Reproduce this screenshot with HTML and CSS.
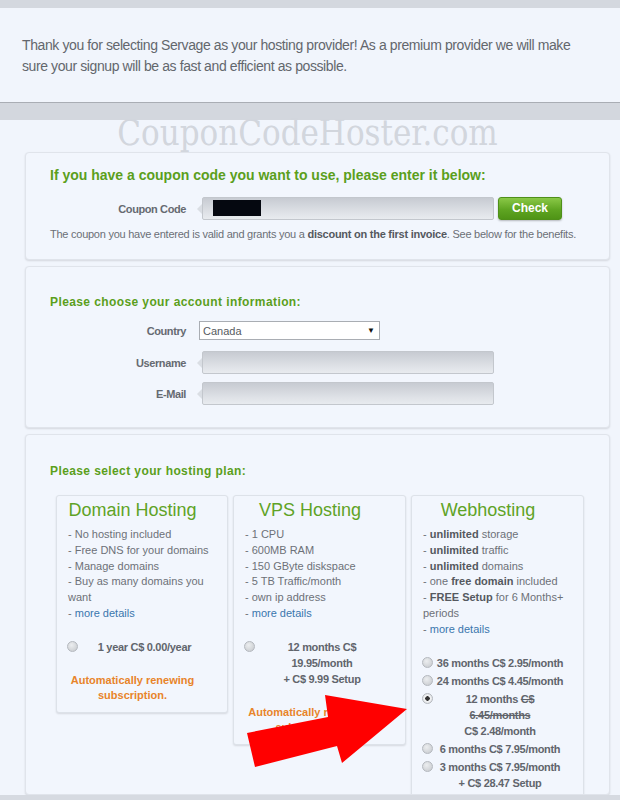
FILE: index.html
```html
<!DOCTYPE html>
<html lang="en">
<head>
    <meta charset="UTF-8">
    <title>Servage Signup</title>
    <link rel="stylesheet" href="styles.css">
</head>
<body>
<div class="page">
    <div class="topbar"></div>
    <div class="intro">
        <p>Thank you for selecting Servage as your hosting provider! As a premium provider we will make sure your signup will be as fast and efficient as possible.</p>
    </div>
    <div class="band"></div>

    <div class="signup">
        <div class="watermark">CouponCodeHoster.com</div>

        <!-- coupon -->
        <div class="card coupon-card">
            <h2 class="big-title">If you have a coupon code you want to use, please enter it below:</h2>
            <div class="form-row">
                <span class="label">Coupon Code</span>
                <div class="field"><span class="code-mask"></span></div>
                <span class="check-btn">Check</span>
            </div>
            <p class="note">The coupon you have entered is valid and grants you a <b>discount on the first invoice</b>. See below for the benefits.</p>
        </div>

        <!-- account -->
        <div class="card account-card">
            <h3 class="title">Please choose your account information:</h3>
            <div class="form-row select-row">
                <span class="label">Country</span>
                <div class="select"><span>Canada</span><span class="caret">&#9660;</span></div>
            </div>
            <div class="form-row user-row">
                <span class="label">Username</span>
                <div class="field"></div>
            </div>
            <div class="form-row mail-row">
                <span class="label">E-Mail</span>
                <div class="field"></div>
            </div>
        </div>

        <!-- plans -->
        <div class="card plans-card">
            <h3 class="title">Please select your hosting plan:</h3>
            <div class="plans">
                <div class="plan">
                    <h4>Domain Hosting</h4>
                    <ul>
                        <li>- No hosting included</li>
                        <li>- Free DNS for your domains</li>
                        <li>- Manage domains</li>
                        <li>- Buy as many domains you want</li>
                        <li>- <a href="#">more details</a></li>
                    </ul>
                    <div class="options">
                        <label class="option"><span class="radio"></span><span class="opt-text">1 year C$ 0.00/year</span></label>
                    </div>
                    <p class="renew">Automatically renewing subscription.</p>
                </div>

                <div class="plan">
                    <h4>VPS Hosting</h4>
                    <ul>
                        <li>- 1 CPU</li>
                        <li>- 600MB RAM</li>
                        <li>- 150 GByte diskspace</li>
                        <li>- 5 TB Traffic/month</li>
                        <li>- own ip address</li>
                        <li>- <a href="#">more details</a></li>
                    </ul>
                    <div class="options">
                        <label class="option"><span class="radio"></span><span class="opt-text">12 months C$<br>19.95/month<br>+ C$ 9.99 Setup</span></label>
                    </div>
                    <p class="renew">Automatically renewing subscription.</p>
                </div>

                <div class="plan">
                    <h4>Webhosting</h4>
                    <ul>
                        <li>- <b>unlimited</b> storage</li>
                        <li>- <b>unlimited</b> traffic</li>
                        <li>- <b>unlimited</b> domains</li>
                        <li>- one <b>free domain</b> included</li>
                        <li>- <b>FREE Setup</b> for 6 Months+ periods</li>
                        <li>- <a href="#">more details</a></li>
                    </ul>
                    <div class="options">
                        <label class="option"><span class="radio"></span><span class="opt-text">36 months C$ 2.95/month</span></label>
                        <label class="option"><span class="radio"></span><span class="opt-text">24 months C$ 4.45/month</span></label>
                        <label class="option"><span class="radio checked"></span><span class="opt-text">12 months <s>C$</s><br><s>6.45/months</s><br>C$ 2.48/month</span></label>
                        <label class="option"><span class="radio"></span><span class="opt-text">6 months C$ 7.95/month</span></label>
                        <label class="option"><span class="radio"></span><span class="opt-text">3 months C$ 7.95/month<br>+ C$ 28.47 Setup</span></label>
                    </div>
                </div>
            </div>
        </div>
    </div>

    <svg class="arrow" width="620" height="800" viewBox="0 0 620 800">
        <polygon points="247,733 328,717 325,695 407,709 342,763 337,746 255,767" fill="#ff0000"/>
    </svg>
</div>
</body>
</html>
```

FILE: styles.css
```css
body {
    margin: 0;
    background: #d6dae1;
    font-family: "Liberation Sans", Arial, sans-serif;
    color: #666a71;
}
.page {
    position: relative;
}
.topbar {
    height: 8px;
    background: #d4d8df;
}
.intro {
    background: #f1f5fc;
    padding: 27px 22px 25px;
    border-bottom: 1px solid #a9adb4;
}
.intro p {
    margin: 0;
    font-size: 14px;
    line-height: 21px;
    letter-spacing: -0.4px;
    color: #63676d;
}
.band {
    height: 17px;
    background: #d3d7de;
}
.signup {
    background: #f1f5fc;
    padding: 0 10px 0 25px;
}
.watermark {
    height: 32px;
    padding-right: 20px;
    text-align: center;
    font-family: "DejaVu Serif Condensed", "DejaVu Serif", serif;
    font-size: 34.5px;
    line-height: 27px;
    color: #d2d6dd;
}
.card {
    background: #f2f6fd;
    border: 1px solid #e0e4eb;
    border-radius: 4px;
    box-shadow: 0 1px 2px rgba(0, 0, 0, 0.12);
    margin-bottom: 6px;
    padding: 14px 24px 18px;
}
.big-title {
    margin: 0;
    font-size: 14px;
    line-height: 17px;
    color: #5b9f1c;
}
.title {
    margin: 0;
    font-size: 12px;
    line-height: 15px;
    letter-spacing: 0.4px;
    color: #5b9f1c;
}
.form-row {
    display: flex;
    align-items: center;
    height: 23px;
    margin-top: 13px;
}
.label {
    width: 136px;
    flex-shrink: 0;
    text-align: right;
    font-size: 11px;
    font-weight: bold;
    letter-spacing: -0.4px;
    color: #666a71;
}
.field {
    position: relative;
    box-sizing: border-box;
    width: 292px;
    height: 23px;
    margin-left: 16px;
    border: 1px solid #c3c7cd;
    border-radius: 2px;
    background: linear-gradient(#c7cbd2, #dfe2e7 70%, #e8ebef);
}
.field::before {
    content: "";
    position: absolute;
    left: -6px;
    top: 6px;
    border-top: 5px solid transparent;
    border-bottom: 5px solid transparent;
    border-right: 5px solid #dadee4;
}
.code-mask {
    display: block;
    width: 48px;
    height: 16px;
    margin: 2px 0 0 10px;
    background: #050810;
}
.check-btn {
    box-sizing: border-box;
    width: 64px;
    height: 23px;
    margin-left: 4px;
    border: 1px solid #4f9019;
    border-radius: 3px;
    background: linear-gradient(#8ac847, #5fa522 55%, #4f9416);
    box-shadow: 0 1px 2px rgba(0, 0, 0, 0.25);
    color: #fff;
    font-size: 12px;
    font-weight: bold;
    line-height: 21px;
    text-align: center;
}
.note {
    margin: 8px 0 0;
    font-size: 11px;
    line-height: 13px;
    letter-spacing: -0.25px;
    white-space: nowrap;
    color: #6b6f76;
}
.note b {
    color: #55595f;
}
.account-card {
    padding-top: 28px;
    padding-bottom: 22px;
}
.select-row {
    height: 19px;
    margin-top: 11px;
}
.user-row {
    margin-top: 11px;
}
.mail-row {
    margin-top: 8px;
}
.select {
    box-sizing: border-box;
    display: flex;
    justify-content: space-between;
    align-items: center;
    width: 181px;
    height: 19px;
    margin-left: 13px;
    padding: 0 4px 0 3px;
    border: 1px solid #a9adb3;
    background: #fff;
    font-size: 11px;
    color: #555a61;
}
.caret {
    font-size: 8px;
    color: #111;
}
.plans-card {
    box-sizing: border-box;
    height: 361px;
    overflow: hidden;
    margin-bottom: 0;
    padding-top: 29px;
}
.plans {
    display: grid;
    grid-template-columns: 172px 173px 173px;
    gap: 5px;
    align-items: start;
    margin: 16px 0 0 6px;
}
.plan {
    background: #f2f6fd;
    border: 1px solid #dde2e9;
    border-radius: 3px;
    box-shadow: 0 1px 2px rgba(0, 0, 0, 0.12);
    padding: 4px 18px 9px 11px;
}
.plan h4 {
    margin: 0;
    padding-right: 12px;
    font-size: 18px;
    font-weight: normal;
    line-height: 21px;
    text-align: center;
    color: #5fa326;
}
.plan ul {
    list-style: none;
    margin: 6px 0 0;
    padding: 0;
    font-size: 11px;
    line-height: 15.8px;
    color: #6d7178;
}
.plan ul b {
    color: #55595f;
}
.plan a {
    color: #3a76ad;
    text-decoration: none;
}
.options {
    margin-top: 17px;
}
.option {
    display: flex;
    align-items: flex-start;
    margin-bottom: 2px;
}
.radio {
    box-sizing: border-box;
    flex-shrink: 0;
    width: 11px;
    height: 11px;
    margin: 2px 2px 0 -1px;
    border: 1px solid #b4b8be;
    border-radius: 50%;
    background: radial-gradient(circle at 40% 35%, #eceef0, #c4c7cb);
}
.radio.checked {
    background: radial-gradient(circle, #333 0, #333 2px, #f4f5f6 2.5px, #d7d9dc);
}
.opt-text {
    flex: 1;
    text-align: center;
    white-space: nowrap;
    font-size: 11px;
    font-weight: bold;
    line-height: 16px;
    letter-spacing: -0.3px;
    color: #61656c;
}
.renew {
    margin: 18px 0 0;
    padding-right: 12px;
    text-align: center;
    font-size: 11px;
    font-weight: bold;
    line-height: 15px;
    color: #e8842a;
}
.arrow {
    position: absolute;
    left: 0;
    top: 0;
    pointer-events: none;
}
```
